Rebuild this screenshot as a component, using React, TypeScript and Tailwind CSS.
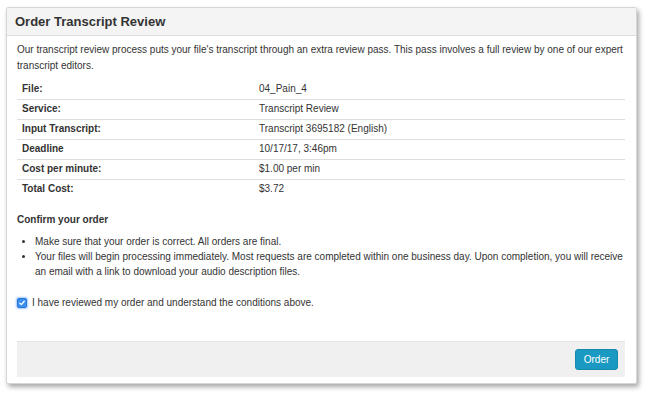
import React from 'react';

const rows = [
  { label: 'File:', value: '04_Pain_4' },
  { label: 'Service:', value: 'Transcript Review' },
  { label: 'Input Transcript:', value: 'Transcript 3695182 (English)' },
  { label: 'Deadline', value: '10/17/17, 3:46pm' },
  { label: 'Cost per minute:', value: '$1.00 per min' },
  { label: 'Total Cost:', value: '$3.72' },
];

export default function App() {
  return (
    <div
      className="w-[650px] h-[400px] bg-white pt-[7px] pl-[6px] text-[#333] text-[10px] leading-[14px]"
      style={{ fontFamily: '"Liberation Sans", Arial, sans-serif' }}
    >
      <div className="w-[631px] h-[377px] border border-[#d6d6d6] rounded-[2px] bg-white shadow-[2px_3px_5px_rgba(0,0,0,0.35)] flex flex-col">
        <div className="h-[28px] bg-[#f4f4f4] border-b border-[#dcdcdc] flex items-center px-[8px]">
          <h1 className="text-[13px] font-bold text-[#333] leading-none">Order Transcript Review</h1>
        </div>

        <div className="flex-1 flex flex-col pl-[10px] pr-[11px] pt-[6px]">
          <p className="leading-[16px]">
            Our transcript review process puts your file's transcript through an extra review pass. This pass
            involves a full review by one of our expert transcript editors.
          </p>

          <table className="w-full mt-[5px] border-collapse">
            <tbody>
              {rows.map((row, i) => (
                <tr key={row.label} className={i > 0 ? 'border-t border-[#dedede]' : ''}>
                  <td className="w-[237px] h-[20px] px-[5px] font-bold align-middle">{row.label}</td>
                  <td className="h-[20px] px-[5px] align-middle">{row.value}</td>
                </tr>
              ))}
            </tbody>
          </table>

          <h2 className="font-bold mt-[14px]">Confirm your order</h2>

          <ul className="list-disc pl-[18px] mt-[7px] leading-[15px]">
            <li>Make sure that your order is correct. All orders are final.</li>
            <li>
              Your files will begin processing immediately. Most requests are completed within one business day.
              Upon completion, you will receive an email with a link to download your audio description files.
            </li>
          </ul>

          <label className="flex items-center gap-[5px] mt-[17px]">
            <span className="w-[10px] h-[10px] rounded-[2px] bg-[#3b8ff0] border border-[#2a78d8] flex items-center justify-center shadow-[0_0_2px_1px_rgba(80,150,255,0.5)]">
              <svg viewBox="0 0 10 10" className="w-[8px] h-[8px]">
                <path d="M2.2 5.2 L4.1 7 L7.8 2.8" fill="none" stroke="white" strokeWidth="1.6" strokeLinecap="round" strokeLinejoin="round" />
              </svg>
            </span>
            <span>I have reviewed my order and understand the conditions above.</span>
          </label>

          <div className="mt-auto mb-[6px] h-[36px] bg-[#f0f0f0] border-t border-[#e4e4e4] flex items-center justify-end pr-[7px]">
            <button className="w-[43px] h-[21px] rounded-[3px] bg-[#1a9ac2] border border-[#1789ad] text-white text-[10px]">
              Order
            </button>
          </div>
        </div>
      </div>
    </div>
  );
}
